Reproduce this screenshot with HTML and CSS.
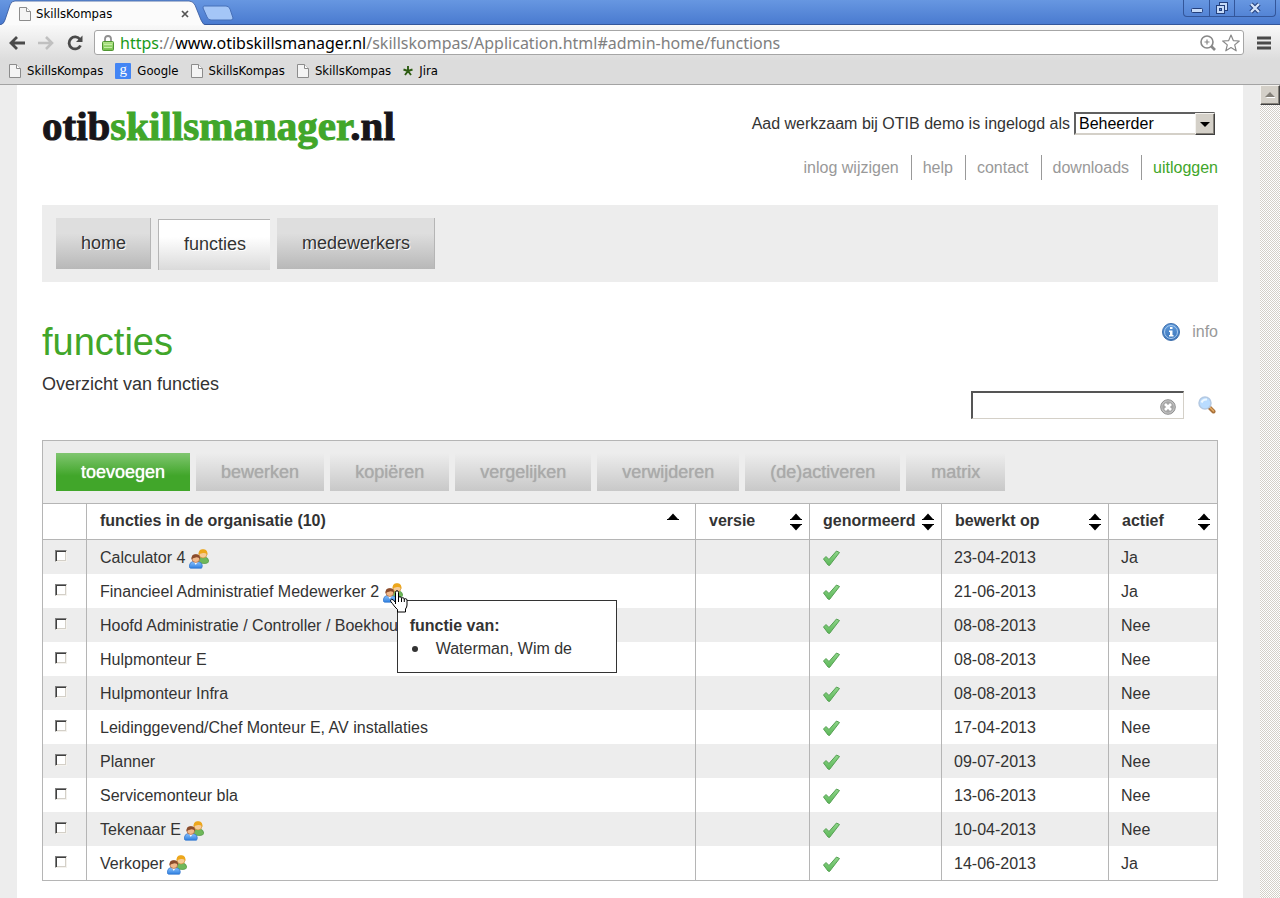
FILE: index.html
```html
<!DOCTYPE html>
<html lang="nl">
<head>
<meta charset="utf-8">
<title>SkillsKompas</title>
<link rel="stylesheet" href="styles.css">
</head>
<body>
<svg class="defs" width="0" height="0" aria-hidden="true">
  <defs>
    <linearGradient id="tickFill" x1="0" y1="0" x2="0" y2="1"><stop offset="0" stop-color="#8fd58a"/><stop offset="1" stop-color="#5cb858"/></linearGradient>
    <linearGradient id="blueFill" x1="0" y1="0" x2="0" y2="1"><stop offset="0" stop-color="#8bc4ff"/><stop offset="1" stop-color="#2f7fe0"/></linearGradient>
    <linearGradient id="infoFill" x1="0" y1="0" x2="0" y2="1"><stop offset="0" stop-color="#5f9bdc"/><stop offset="1" stop-color="#3a73b8"/></linearGradient>
    <linearGradient id="lockFill" x1="0" y1="0" x2="0" y2="1"><stop offset="0" stop-color="#b5e68c"/><stop offset="1" stop-color="#72c04a"/></linearGradient>
    <symbol id="doc" viewBox="0 0 12 14"><path d="M.5.5h7l4 4v9H.5z" fill="#f4f4f4" stroke="#8c8c8c"/><path d="M7.500.5v4h4" fill="#fff" stroke="#8c8c8c"/></symbol>
    <symbol id="tick" viewBox="0 0 20 18"><path d="M1.500 10 4 7.500 7 10.500 14.500 2l3 1.500L7.500 16.500 6 16z" fill="url(#tickFill)" stroke="#55a052" stroke-linejoin="round"/></symbol>
    <symbol id="people" viewBox="0 0 20 20">
      <path d="M8.500 14V11.500Q9 8.500 12 8h4q3.500.5 3.800 4.500-.8 2-3.800 2z" fill="#6fb85a" stroke="#4b9440" stroke-width=".7"/>
      <circle cx="14" cy="5" r="4" fill="#f6cb96" stroke="#c98a2a" stroke-width=".6"/>
      <path d="M9.600 6Q9 .3 14 .3T18.400 6Q17.500 3.500 14 4T9.600 6z" fill="#eda71c"/>
      <path d="M.5 18.500V16Q1 13 4 12.500h5q3.500.5 4.200 3.500.3 2-.7 3.200H1.500z" fill="url(#blueFill)" stroke="#2d72cc" stroke-width=".7"/>
      <path d="M5 12.800 6.800 16l1.900-3.200z" fill="#fff"/>
      <circle cx="6.800" cy="9.600" r="3.900" fill="#f2b98a" stroke="#9a5630" stroke-width=".6"/>
      <path d="M2.500 10.500Q2 5.200 6.800 5.200T11.100 10.500Q10 8 6.800 8.400T2.500 10.500z" fill="#8b4c2c"/>
    </symbol>
    <symbol id="sort" viewBox="0 0 12 18"><path d="M0 6h1l5-5.500L11 6h1v1H0zM0 11h12v1h-1l-5 5.500L1 12H0z" fill="#000"/></symbol>
    <symbol id="sortUp" viewBox="0 0 12 18"><path d="M0 6h1l5-5.500L11 6h1v1H0z" fill="#000"/></symbol>
  </defs>
</svg>

<div class="titlebar">
  <div class="tab">
    <svg class="tab-shape" viewBox="0 0 206 25" preserveAspectRatio="none" aria-hidden="true"><path d="M0 25Q4 24 5 20L10 5Q11 1 15 1H189Q193 1 195 5L201 20Q203 25 206 25z" fill="#fbfbfb"/><path d="M0 25Q4 24 5 20L10 5Q11 1 15 1H189Q193 1 195 5L201 20Q203 25 206 25" fill="none" stroke="#33569a" stroke-width=".8"/></svg>
    <svg class="doc" aria-hidden="true"><use href="#doc"/></svg>
    <span class="tab-title">SkillsKompas</span>
    <button class="tab-close" type="button" aria-label="Tab sluiten"><svg width="8" height="8" viewBox="0 0 8 8"><path d="M1 1l6 6M7 1L1 7" stroke="#555" stroke-width="1.700"/></svg></button>
  </div>
  <button class="new-tab" type="button" aria-label="Nieuw tabblad"><svg width="32" height="16" viewBox="0 0 32 16"><path d="M2 1h22q3 0 4 3l3 9q0 2-2 2H9q-3 0-4-3L1 3q0-2 1-2z" fill="#a4c6f7" stroke="#4770b8"/></svg></button>
  <div class="window-buttons">
    <button type="button" aria-label="Minimaliseren"><svg width="14" height="14" viewBox="0 0 14 14"><rect x="1.500" y="7.500" width="11" height="4" rx="1" fill="#c5daf8" stroke="#24407c"/></svg></button>
    <button type="button" aria-label="Herstellen"><svg width="14" height="14" viewBox="0 0 14 14"><rect x="4.500" y="1.500" width="8" height="8" fill="#c5daf8" stroke="#24407c"/><rect x="1.500" y="4.500" width="8" height="8" fill="#c5daf8" stroke="#24407c"/><rect x="4.500" y="7.500" width="2" height="2" fill="#5c8ad6" stroke="#24407c"/></svg></button>
    <button class="wide" type="button" aria-label="Sluiten"><svg width="14" height="14" viewBox="0 0 14 14"><path d="M3 3l8 8M11 3l-8 8" stroke="#24407c" stroke-width="4.500"/><path d="M3 3l8 8M11 3l-8 8" stroke="#d4e4fb" stroke-width="2.400"/></svg></button>
  </div>
</div>

<div class="toolbar">
  <div class="address-row">
    <button type="button" aria-label="Terug"><svg width="16" height="14" viewBox="0 0 16 14"><path d="M8 1L2 7l6 6M2 7h14" fill="none" stroke="#4a4a4a" stroke-width="2.800"/></svg></button>
    <button type="button" aria-label="Vooruit"><svg width="16" height="14" viewBox="0 0 16 14"><path d="M8 1l6 6-6 6M14 7H0" fill="none" stroke="#c0c0c0" stroke-width="2.600"/></svg></button>
    <button type="button" aria-label="Vernieuwen"><svg width="16" height="16" viewBox="0 0 16 16"><path d="M13 4.500A6 6 0 1 0 13.500 10.500" fill="none" stroke="#4a4a4a" stroke-width="2.800"/><path d="M15.500.5v6.500H9z" fill="#4a4a4a"/></svg></button>
    <div class="address">
      <svg width="12" height="16" viewBox="0 0 12 16" aria-hidden="true"><path d="M3 7V4q0-3 3-3t3 3v3" fill="none" stroke="#909090" stroke-width="1.800"/><rect x=".5" y="6.500" width="11" height="9" rx="1" fill="url(#lockFill)" stroke="#4f9532"/><path d="M2 9.500h8M2 12.500h8" stroke="#c6efa6"/></svg>
      <span class="url"><span class="secure">https</span>://<span class="host">www.otibskillsmanager.nl</span>/skillskompas/Application.html#admin-home/functions</span>
      <svg width="16" height="16" viewBox="0 0 16 16" aria-hidden="true"><circle cx="7" cy="7" r="6" fill="none" stroke="#888" stroke-width="1.600"/><path d="M4.500 7h5M7 4.500v5" stroke="#888" stroke-width="1.200"/><path d="M11 11l4 4" stroke="#888" stroke-width="2.600"/></svg>
      <svg width="18" height="18" viewBox="0 0 18 18" aria-hidden="true"><path d="M9 1l2.300 5.600 6 .4-4.600 3.900 1.500 5.900L9 13.600l-5.200 3.200 1.500-5.900L.7 7l6-.4z" fill="#fff" stroke="#888" stroke-width="1.200" stroke-linejoin="round"/></svg>
    </div>
    <button type="button" aria-label="Menu"><svg width="14" height="14" viewBox="0 0 14 14"><path d="M0 2h14M0 7h14M0 12h14" stroke="#4a4a4a" stroke-width="3"/></svg></button>
  </div>
  <div class="bookmarks">
    <a href="#"><svg class="doc" aria-hidden="true"><use href="#doc"/></svg>SkillsKompas</a>
    <a href="#"><span class="google" aria-hidden="true">g</span>Google</a>
    <a href="#"><svg class="doc" aria-hidden="true"><use href="#doc"/></svg>SkillsKompas</a>
    <a href="#"><svg class="doc" aria-hidden="true"><use href="#doc"/></svg>SkillsKompas</a>
    <a href="#"><svg width="10" height="12" viewBox="0 0 10 12" aria-hidden="true"><path d="M5 6V1M5 6L.5 4.500M5 6L9.500 4.500M5 6L2 10M5 6L8 10" stroke="#2d5c12" stroke-width="1.900"/></svg>Jira</a>
  </div>
</div>

<div class="viewport">
  <main class="page">
    <header class="header">
      <div class="logo">otib<span>skillsmanager</span>.nl</div>
      <div class="account">
        <div class="role">
          <label for="role">Aad werkzaam bij OTIB demo is ingelogd als</label>
          <span class="select-wrap">
            <select id="role"><option>Beheerder</option></select>
            <span class="select-arrow" aria-hidden="true"><svg width="10" height="5" viewBox="0 0 10 5"><path d="M0 0h10L5 5z"/></svg></span>
          </span>
        </div>
        <nav class="links">
          <a href="#">inlog wijzigen</a><a href="#">help</a><a href="#">contact</a><a href="#">downloads</a><a class="logout" href="#">uitloggen</a>
        </nav>
      </div>
    </header>

    <nav class="menu">
      <a href="#">home</a>
      <a class="active" href="#">functies</a>
      <a href="#">medewerkers</a>
    </nav>

    <section class="intro">
      <div>
        <h1>functies</h1>
        <p>Overzicht van functies</p>
      </div>
      <div class="tools">
        <a class="info" href="#"><svg width="18" height="18" viewBox="0 0 18 18" aria-hidden="true"><circle cx="9" cy="9" r="8.500" fill="url(#infoFill)" stroke="#4070ac"/><circle cx="9" cy="9" r="6.500" fill="none" stroke="#a9cbf0"/><path d="M8 4h2.500v2H8zM7 7.500h3.500V12h1v1.500H7V12h1V9H7z" fill="#fff"/></svg>info</a>
        <div class="search">
          <span class="field">
            <input type="text" aria-label="Zoeken">
            <button class="clear" type="button" aria-label="Wissen"><svg width="16" height="16" viewBox="0 0 16 16"><circle cx="8" cy="8" r="7.300" fill="#c4c4c4" stroke="#8c8c8c"/><circle cx="8" cy="8" r="5.800" fill="#a6a6a6"/><path d="M5 5l6 6M11 5l-6 6" stroke="#fff" stroke-width="2.600"/></svg></button>
          </span>
          <button type="button" aria-label="Zoek"><svg width="18" height="18" viewBox="0 0 18 18"><path d="M11.500 11.500l4 4" stroke="#a9713a" stroke-width="4" stroke-linecap="round"/><path d="M12 11.500l3.500 3.500" stroke="#e5ac65" stroke-width="1.500" stroke-linecap="round"/><circle cx="7" cy="7" r="6" fill="#b9dcff" stroke="#b4c9e2" stroke-width="1.500"/><path d="M3.500 6.500Q5 3 9 3.500" stroke="#eef8ff" stroke-width="2" fill="none"/></svg></button>
        </div>
      </div>
    </section>

    <section class="grid">
      <div class="actions">
        <button class="primary" type="button">toevoegen</button>
        <button type="button" disabled>bewerken</button>
        <button type="button" disabled>kopiëren</button>
        <button type="button" disabled>vergelijken</button>
        <button type="button" disabled>verwijderen</button>
        <button type="button" disabled>(de)activeren</button>
        <button type="button" disabled>matrix</button>
      </div>
      <table>
        <colgroup><col class="c-check"><col><col class="c-version"><col class="c-norm"><col class="c-date"><col class="c-active"></colgroup>
        <thead>
          <tr>
            <th></th>
            <th><div class="head first">functies in de organisatie (10)<svg class="sort" aria-hidden="true"><use href="#sortUp"/></svg></div></th>
            <th><div class="head">versie<svg class="sort" aria-hidden="true"><use href="#sort"/></svg></div></th>
            <th><div class="head">genormeerd<svg class="sort" aria-hidden="true"><use href="#sort"/></svg></div></th>
            <th><div class="head">bewerkt op<svg class="sort" aria-hidden="true"><use href="#sort"/></svg></div></th>
            <th><div class="head">actief<svg class="sort" aria-hidden="true"><use href="#sort"/></svg></div></th>
          </tr>
        </thead>
        <tbody>
          <tr><td><input type="checkbox" aria-label="Calculator 4"></td><td>Calculator 4 <span class="members"><svg class="people" aria-hidden="true"><use href="#people"/></svg></span></td><td></td><td><svg class="tick" role="img" aria-label="ja"><use href="#tick"/></svg></td><td>23-04-2013</td><td>Ja</td></tr>
          <tr><td><input type="checkbox" aria-label="Financieel Administratief Medewerker 2"></td><td>Financieel Administratief Medewerker 2 <span class="members"><svg class="people" aria-hidden="true"><use href="#people"/></svg><span class="tooltip" role="tooltip"><strong>functie van:</strong><span class="member">Waterman, Wim de</span></span><svg class="hand" viewBox="0 0 18 23" aria-hidden="true"><path d="M5.500 14V2.500Q5.500.7 7 .7t1.500 1.800V8q0-1.300 1.300-1.300T11.500 8v.7q0-1 1.300-1t1.500 1.300v.7q0-1 1.300-1t1.400 1.500V15q0 2-1.500 4v3H7.500v-2.500L5 17Q2 13 .8 11.500 0 10 1.500 9.300q1.500-.5 4 3.200z" fill="#fff" stroke="#000"/><path d="M8.500 8v4M11.500 8.700V12M14.300 9.700V12" stroke="#000"/></svg></span></td><td></td><td><svg class="tick" role="img" aria-label="ja"><use href="#tick"/></svg></td><td>21-06-2013</td><td>Ja</td></tr>
          <tr><td><input type="checkbox" aria-label="Hoofd Administratie"></td><td>Hoofd Administratie / Controller / Boekhouder</td><td></td><td><svg class="tick" role="img" aria-label="ja"><use href="#tick"/></svg></td><td>08-08-2013</td><td>Nee</td></tr>
          <tr><td><input type="checkbox" aria-label="Hulpmonteur E"></td><td>Hulpmonteur E</td><td></td><td><svg class="tick" role="img" aria-label="ja"><use href="#tick"/></svg></td><td>08-08-2013</td><td>Nee</td></tr>
          <tr><td><input type="checkbox" aria-label="Hulpmonteur Infra"></td><td>Hulpmonteur Infra</td><td></td><td><svg class="tick" role="img" aria-label="ja"><use href="#tick"/></svg></td><td>08-08-2013</td><td>Nee</td></tr>
          <tr><td><input type="checkbox" aria-label="Leidinggevend/Chef Monteur E, AV installaties"></td><td>Leidinggevend/Chef Monteur E, AV installaties</td><td></td><td><svg class="tick" role="img" aria-label="ja"><use href="#tick"/></svg></td><td>17-04-2013</td><td>Nee</td></tr>
          <tr><td><input type="checkbox" aria-label="Planner"></td><td>Planner</td><td></td><td><svg class="tick" role="img" aria-label="ja"><use href="#tick"/></svg></td><td>09-07-2013</td><td>Nee</td></tr>
          <tr><td><input type="checkbox" aria-label="Servicemonteur bla"></td><td>Servicemonteur bla</td><td></td><td><svg class="tick" role="img" aria-label="ja"><use href="#tick"/></svg></td><td>13-06-2013</td><td>Nee</td></tr>
          <tr><td><input type="checkbox" aria-label="Tekenaar E"></td><td>Tekenaar E <span class="members"><svg class="people" aria-hidden="true"><use href="#people"/></svg></span></td><td></td><td><svg class="tick" role="img" aria-label="ja"><use href="#tick"/></svg></td><td>10-04-2013</td><td>Nee</td></tr>
          <tr><td><input type="checkbox" aria-label="Verkoper"></td><td>Verkoper <span class="members"><svg class="people" aria-hidden="true"><use href="#people"/></svg></span></td><td></td><td><svg class="tick" role="img" aria-label="ja"><use href="#tick"/></svg></td><td>14-06-2013</td><td>Ja</td></tr>
        </tbody>
      </table>
    </section>
  </main>
  <div class="scrollbar" aria-hidden="true"><div class="scroll-up"><svg width="10" height="6" viewBox="0 0 10 6"><path d="M1 6h10L6 1z" fill="#fff"/><path d="M0 5h10L5 0z" fill="#848078"/></svg></div></div>
</div>
</body>
</html>
```
FILE: styles.css
```css
* {
  box-sizing: border-box;
}

body {
  margin: 0;
  min-height: 100vh;
  display: flex;
  flex-direction: column;
  overflow: hidden;
  background: #ededed;
  color: #333;
  font: 16px/20px "Liberation Sans", Arial, sans-serif;
}

a {
  color: inherit;
  text-decoration: none;
}

button {
  padding: 0;
  border: 0;
  background: none;
  font: inherit;
}

svg {
  display: block;
  flex: none;
}

.defs {
  position: absolute;
}

.doc {
  width: 12px;
  height: 14px;
}

/* Browser window */
.titlebar {
  display: flex;
  height: 25px;
  background: linear-gradient(#6797e1, #4a7bd0);
  border-bottom: 1px solid #33569a;
  color: #000;
  font: 13px/18px "DejaVu Sans Condensed", "Noto Sans", sans-serif;
}

.tab {
  position: relative;
  display: flex;
  align-items: center;
  width: 206px;
  height: 25px;
  padding: 2px 16px 0 19px;
}

.tab-shape {
  position: absolute;
  inset: 0;
  width: 100%;
  height: 100%;
}

.tab .doc,
.tab-title,
.tab-close {
  position: relative;
}

.tab-title {
  flex: 1;
  margin-left: 5px;
}

.tab-close svg {
  margin: 0 1px;
}

.new-tab {
  align-self: center;
  margin: 2px 0 0 -4px;
}

.window-buttons {
  display: flex;
  height: 17px;
  margin: 0 4px 0 auto;
  border: 1px solid #33569a;
  border-top: 0;
  border-radius: 0 0 4px 4px;
}

.window-buttons button {
  display: flex;
  align-items: center;
  justify-content: center;
  width: 25px;
}

.window-buttons .wide {
  width: 41px;
}

.window-buttons button + button {
  border-left: 1px solid #33569a;
}

.toolbar {
  height: 60px;
  padding: 5px 9px 0;
  background: linear-gradient(#f9f9f9, #dcdcdc 60%);
  border-bottom: 1px solid #a3a3a3;
  color: #000;
  font: 13px/18px "DejaVu Sans Condensed", "Noto Sans", sans-serif;
}

.address-row {
  display: flex;
  align-items: center;
  gap: 13px;
}

.address {
  display: flex;
  flex: 1;
  align-items: center;
  gap: 6px;
  min-width: 0;
  height: 25px;
  margin-left: -2px;
  padding: 0 3px 0 7px;
  background: #fff;
  border: 1px solid #a6a6a6;
  border-radius: 3px;
}

.url {
  flex: 1;
  color: #808080;
  font: 16px/20px "Noto Sans", sans-serif;
  white-space: nowrap;
}

.secure {
  color: #1a9a1a;
}

.host {
  color: #000;
}

.bookmarks {
  display: flex;
  gap: 12px;
  margin-top: 7px;
}

.bookmarks a {
  display: flex;
  align-items: center;
  gap: 6px;
}

.google {
  width: 16px;
  height: 16px;
  border-radius: 1px;
  background: #4385f4;
  color: #fff;
  font: 15px/12px "Liberation Serif", serif;
  text-align: center;
}

/* Page */
.viewport {
  display: flex;
  flex: 1;
}

.page {
  flex: 1;
  min-width: 0;
  margin: 0 17px;
  padding: 0 25px 17px;
  background: #fff;
}

.scrollbar {
  width: 20px;
  background: repeating-conic-gradient(#d4d0c8 0 25%, #fff 0 50%) 0 0 / 2px 2px;
}

.scroll-up {
  display: flex;
  align-items: center;
  justify-content: center;
  height: 20px;
  background: #d4d0c8;
  border: 1px solid;
  border-color: #f4f2ee #404040 #404040 #f4f2ee;
  box-shadow: inset -1px -1px #848078;
}

.header {
  display: flex;
  justify-content: space-between;
  height: 120px;
  padding-top: 21px;
}

.logo {
  color: #17151a;
  font: bold 41px/40px "Liberation Serif", serif;
  -webkit-text-stroke: 1px currentColor;
}

.logo span {
  color: #41a62a;
}

.account {
  display: flex;
  flex-direction: column;
  align-items: flex-end;
  gap: 20px;
  padding-top: 6px;
}

.role {
  display: flex;
  align-items: center;
  gap: 4px;
  margin-right: 3px;
}

.select-wrap {
  position: relative;
  width: 141px;
  height: 23px;
}

select {
  width: 100%;
  height: 100%;
  padding: 0 24px 0 3px;
  appearance: none;
  background: #fff;
  border: 2px solid;
  border-color: #606060 #d4d0c8 #d4d0c8 #606060;
  border-radius: 0;
  color: #000;
  font: inherit;
}

.select-arrow {
  position: absolute;
  top: 1px;
  right: 0;
  bottom: 0;
  display: flex;
  align-items: center;
  justify-content: center;
  width: 20px;
  background: #d4d0c8;
  border: 1px solid;
  border-color: #f4f2ee #404040 #404040 #f4f2ee;
  box-shadow: inset -1px -1px #848078;
  pointer-events: none;
}

.links {
  display: flex;
  color: #999;
  line-height: 25px;
}

.links a {
  padding: 0 12px 0 11px;
  border-right: 1px solid #999;
}

.links .logout {
  padding-right: 0;
  border: 0;
  color: #41a62a;
}

.menu {
  display: flex;
  align-items: flex-start;
  gap: 7px;
  padding: 13px 14px 12px;
  background: #ededed;
  font-size: 18px;
  line-height: 51px;
  text-shadow: 1px 1px #fff;
}

.menu a {
  margin-bottom: 1px;
  padding: 0 24px 0 25px;
  background: linear-gradient(#dedede 30%, #b8b8b8);
  border-right: 1px solid #b5b5b5;
}

.menu .active {
  margin: 1px 0 0;
  background: linear-gradient(#fff 35%, #dadada);
  border: 0;
  border-left: 1px solid #b5b5b5;
  box-shadow: inset 0 1px #b5b5b5;
}

.intro {
  display: flex;
  justify-content: space-between;
  height: 158px;
  padding-top: 36px;
}

h1 {
  margin: 0;
  color: #41a62a;
  font-size: 38px;
  font-weight: normal;
  line-height: 48px;
}

.intro p {
  margin: 8px 0 0;
  font-size: 18px;
}

.tools {
  display: flex;
  flex-direction: column;
  align-items: flex-end;
  gap: 49px;
  padding-top: 4px;
}

.info {
  display: flex;
  align-items: center;
  gap: 12px;
  color: #999;
}

.search {
  display: flex;
  align-items: center;
  gap: 14px;
  padding-right: 2px;
}

.field {
  position: relative;
}

.field input {
  display: block;
  width: 213px;
  height: 28px;
  padding: 0 24px 0 4px;
  background: #fff;
  border: 2px solid;
  border-color: #555 #d4d0c8 #d4d0c8 #555;
  border-right-width: 1px;
  border-bottom-width: 1px;
  font: inherit;
}

.clear {
  position: absolute;
  top: 8px;
  right: 8px;
}

/* Grid */
.grid {
  border: 1px solid #b5b5b5;
}

.actions {
  display: flex;
  gap: 6px;
  padding: 12px 13px;
  background: #ededed;
  border-bottom: 1px solid #b5b5b5;
}

.actions button {
  height: 38px;
  padding: 0 25px;
  background: linear-gradient(#ededed, #c8c8c8);
  color: #aaa;
  font-size: 18px;
  text-shadow: 0 0 1px #aaa;
}

.actions .primary {
  background: linear-gradient(#80c670, #41a62a 60%);
  color: #fff;
  text-shadow: 0 0 1px #fff;
}

table {
  width: 100%;
  table-layout: fixed;
  border-spacing: 0;
}

.c-check { width: 43px; }
.c-version { width: 114px; }
.c-norm { width: 132px; }
.c-date { width: 167px; }
.c-active { width: 109px; }

th,
td {
  padding: 2px 0 0 12px;
  border-left: 1px solid #b5b5b5;
  text-align: left;
  white-space: nowrap;
}

th {
  height: 36px;
  padding: 0 7px 2px 13px;
  border-bottom: 1px solid #b5b5b5;
}

th:first-child,
td:first-child {
  border-left: 0;
}

td {
  height: 34px;
}

td:nth-child(2) {
  padding-left: 13px;
}

tbody tr:nth-child(odd) {
  background: #ededed;
}

.head {
  display: flex;
  align-items: center;
  justify-content: space-between;
}

.head.first {
  padding-right: 9px;
}

.sort {
  width: 12px;
  height: 18px;
  margin-top: 2px;
}

.tick {
  width: 20px;
  height: 18px;
}

input[type="checkbox"] {
  display: block;
  width: 12px;
  height: 12px;
  margin: 0 0 4px;
  appearance: none;
  background: #fff;
  border: 1px solid;
  border-color: #808080 #f4f2ee #f4f2ee #808080;
  box-shadow: inset 1px 1px #404040, inset -1px -1px #d4d0c8;
}

.members {
  position: relative;
  display: inline-block;
  width: 20px;
  height: 14px;
  margin-left: -1px;
  vertical-align: -4px;
}

.people {
  width: 20px;
  height: 20px;
  margin-top: -4px;
}

.tooltip {
  position: absolute;
  z-index: 1;
  top: 13px;
  left: 14px;
  width: 220px;
  padding: 13px 12px 12px;
  background: #fff;
  border: 1px solid #333;
  line-height: 23px;
}

.tooltip strong {
  display: block;
}

.member {
  display: flex;
  align-items: center;
  gap: 18px;
}

.member::before {
  content: "";
  width: 6px;
  height: 6px;
  margin-left: 2px;
  border-radius: 50%;
  background: #333;
}

.hand {
  position: absolute;
  z-index: 2;
  top: 3px;
  left: 7px;
  width: 18px;
  height: 23px;
}
```
